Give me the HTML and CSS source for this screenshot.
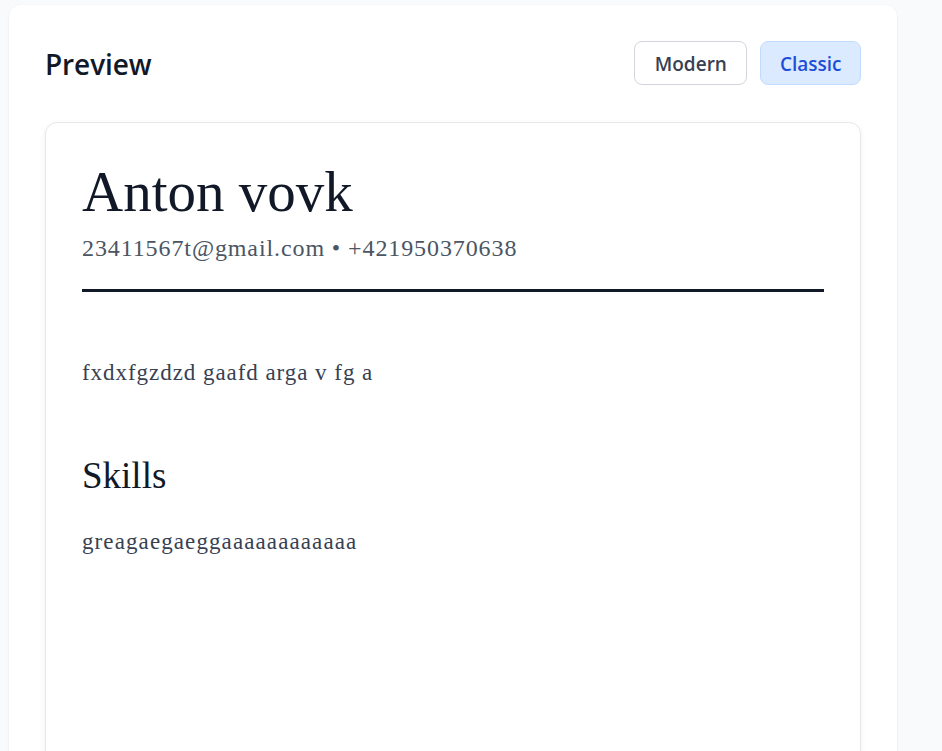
FILE: index.html
```html
<!DOCTYPE html>
<html lang="en">
<head>
  <meta charset="UTF-8">
  <meta name="viewport" content="width=device-width, initial-scale=1.0">
  <title>Resume Preview</title>
  <link rel="stylesheet" href="styles.css">
</head>
<body>
  <div class="layout">
    <section class="panel">
      <header class="panel-head">
        <h2>Preview</h2>
        <div class="switch">
          <button type="button" class="tpl">Modern</button>
          <button type="button" class="tpl active">Classic</button>
        </div>
      </header>

      <!-- resume sheet -->
      <article class="sheet">
        <div class="sheet-top">
          <h1>Anton vovk</h1>
          <p class="contact">23411567t@gmail.com • +421950370638</p>
        </div>
        <p class="summary">fxdxfgzdzd gaafd arga v fg a</p>
        <h3>Skills</h3>
        <p class="skills">greagaegaeggaaaaaaaaaaaa</p>
      </article>
    </section>
  </div>
</body>
</html>
```

FILE: styles.css
```css
:root {
  --ink:#111827;
  --muted:#4b5563;
  --text:#374151;
  --line:#e5e7eb;
  --bg:#f8fafc;
}
*{box-sizing:border-box;margin:0;padding:0}
body{background:var(--bg);font-family:'Open Sans','Noto Sans',sans-serif;color:var(--ink);overflow:hidden}
.layout{padding:5px 0 0 9px;height:100vh}
.panel{width:888px;min-height:900px;background:#fff;border-radius:12px;padding:36px;box-shadow:0 1px 3px rgba(15,23,42,.08)}

.panel-head{display:flex;align-items:center;justify-content:space-between;margin-bottom:37px}
.panel-head h2{font-size:28px;font-weight:600;letter-spacing:-.1px;padding-top:2px}
.switch{display:flex;gap:13px}
.tpl{height:44px;padding:1px 19.5px 0;border:1px solid #d1d5db;border-radius:8px;background:#fff;color:var(--text);font-family:inherit;font-size:19px;font-weight:600;cursor:pointer}
.tpl.active{padding:1px 18.5px 0;background:#dbeafe;border-color:#bfdbfe;color:#1d4ed8}

/* classic template */
.sheet{min-height:700px;border:1px solid var(--line);border-radius:12px;padding:36px;font-family:'Liberation Serif','Times New Roman',serif;box-shadow:0 2px 6px rgba(15,23,42,.06)}
.sheet-top{border-bottom:3px solid var(--ink);padding-bottom:26px;margin-bottom:66px}
.sheet h1{font-size:57px;font-weight:400;line-height:66px;color:var(--ink)}
.contact{font-size:24px;letter-spacing:.9px;line-height:30px;color:var(--muted);margin-top:8px}
.summary{font-size:23px;letter-spacing:.95px;line-height:30px;color:var(--text)}
.sheet h3{font-size:37px;font-weight:400;line-height:44px;color:var(--ink);margin-top:66px}
.skills{font-size:23px;letter-spacing:1.1px;line-height:30px;color:var(--text);margin-top:29px}
```
